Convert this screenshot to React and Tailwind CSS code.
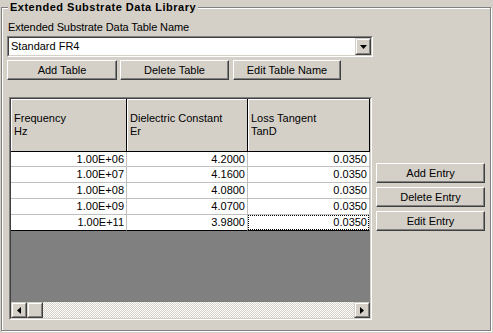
import React from "react";

const raised =
  "border border-t-white border-l-white border-r-[#404040] border-b-[#404040] shadow-[inset_-1px_-1px_0_#808080]";

function Btn({ children, className = "" }) {
  return (
    <div className={`${raised} bg-[#d4d0c8] h-[20px] flex items-center justify-center ${className}`}>
      {children}
    </div>
  );
}

function SmallBtn({ children, className = "" }) {
  return (
    <div className={`border border-t-[#d4d0c8] border-l-[#d4d0c8] border-r-[#404040] border-b-[#404040] bg-[#d4d0c8] ${className}`}>
      <div className="w-full h-full border border-t-white border-l-white border-r-[#808080] border-b-[#808080] flex items-center justify-center">
        {children}
      </div>
    </div>
  );
}

const rows = [
  ["1.00E+06", "4.2000", "0.0350"],
  ["1.00E+07", "4.1600", "0.0350"],
  ["1.00E+08", "4.0800", "0.0350"],
  ["1.00E+09", "4.0700", "0.0350"],
  ["1.00E+11", "3.9800", "0.0350"],
];

const widths = ["w-[116px]", "w-[121px]", "w-[122px]"];

export default function App() {
  return (
    <div className="w-[493px] h-[333px] bg-[#d4d0c8] pt-[7px] pl-[1px] font-['Liberation_Sans',Arial,sans-serif] text-[11px] leading-[13px] text-black overflow-hidden">
      <div className="relative w-[490px] h-[324px] border border-[#808080] shadow-[inset_1px_1px_0_#fff,1px_1px_0_#fff] pl-[5px] pt-[13px]">
        <div className="absolute left-[6px] top-[-7px] px-[2px] bg-[#d4d0c8] font-bold tracking-[0.5px]">
          Extended Substrate Data Library
        </div>
        <div className="pl-[1px] tracking-[-0.1px]">Extended Substrate Data Table Name</div>
        {/* combo */}
        <div className="mt-[2px] w-[366px] h-[21px] border border-t-[#808080] border-l-[#808080] border-r-white border-b-white">
          <div className="w-full h-full border border-t-[#404040] border-l-[#404040] border-r-[#d4d0c8] border-b-[#d4d0c8] bg-white flex">
            <div className="flex-1 pl-[2px] flex items-center">Standard FR4</div>
            <SmallBtn className="w-[16px] h-[17px]">
              <svg width="7" height="4" viewBox="0 0 7 4">
                <polygon points="0,0 7,0 3.5,4" fill="#000" />
              </svg>
            </SmallBtn>
          </div>
        </div>
        {/* table buttons */}
        <div className="flex mt-[3px]">
          <Btn className="w-[110px]">Add Table</Btn>
          <Btn className="w-[109px] ml-[3px]">Delete Table</Btn>
          <Btn className="w-[108px] ml-[4px]">Edit Table Name</Btn>
        </div>
        {/* grid + entry buttons */}
        <div className="flex items-start mt-[17px]">
          <div className="ml-[2px] w-[363px] h-[223px] border border-t-[#808080] border-l-[#808080] border-r-white border-b-white">
            <div className="w-full h-full border border-t-[#404040] border-l-[#404040] border-r-[#d4d0c8] border-b-[#d4d0c8] bg-[#808080] flex flex-col">
              <div className="flex h-[53px]">
                {[
                  ["Frequency", "Hz"],
                  ["Dielectric Constant", "Er"],
                  ["Loss Tangent", "TanD"],
                ].map((h, i) => (
                  <div
                    key={i}
                    className={`${widths[i]} h-full bg-[#d4d0c8] border-r border-b border-black shadow-[inset_1px_1px_0_#fff] flex flex-col justify-center pl-[3px]`}
                  >
                    <div>{h[0]}</div>
                    <div>{h[1]}</div>
                  </div>
                ))}
              </div>
              {rows.map((r, ri) => {
                const last = ri === rows.length - 1;
                const h = ri === 0 ? "h-[15px]" : "h-[16px]";
                return (
                  <div key={ri} className={`flex ${h}`}>
                    {r.map((v, ci) => {
                      const focus = last && ci === 2;
                      return (
                        <div
                          key={ci}
                          className={`${widths[ci]} h-full bg-white border-r border-b ${last ? "border-b-black" : "border-b-[#c0c0c0]"} border-r-[#c0c0c0] text-right`}
                        >
                          <div
                            className={`h-full pr-[2px] leading-[15px] ${focus ? "outline outline-1 outline-dotted outline-black -outline-offset-1" : ""}`}
                          >
                            {v}
                          </div>
                        </div>
                      );
                    })}
                  </div>
                );
              })}
              <div className="flex-1" />
              <div className="h-[16px] flex bg-[repeating-conic-gradient(#ffffff_0%_25%,#d4d0c8_0%_50%)] [background-size:2px_2px]">
                <SmallBtn className="w-[16px] h-[16px]">
                  <svg width="4" height="7" viewBox="0 0 4 7">
                    <polygon points="4,0 4,7 0,3.5" fill="#000" />
                  </svg>
                </SmallBtn>
                <SmallBtn className="w-[16px] h-[16px]" />
                <div className="flex-1" />
                <SmallBtn className="w-[16px] h-[16px]">
                  <svg width="4" height="7" viewBox="0 0 4 7">
                    <polygon points="0,0 0,7 4,3.5" fill="#000" />
                  </svg>
                </SmallBtn>
              </div>
            </div>
          </div>
          <div className="ml-[4px] pt-[66px] flex flex-col gap-[4px]">
            <Btn className="w-[109px]">Add Entry</Btn>
            <Btn className="w-[109px]">Delete Entry</Btn>
            <Btn className="w-[109px]">Edit Entry</Btn>
          </div>
        </div>
      </div>
    </div>
  );
}
